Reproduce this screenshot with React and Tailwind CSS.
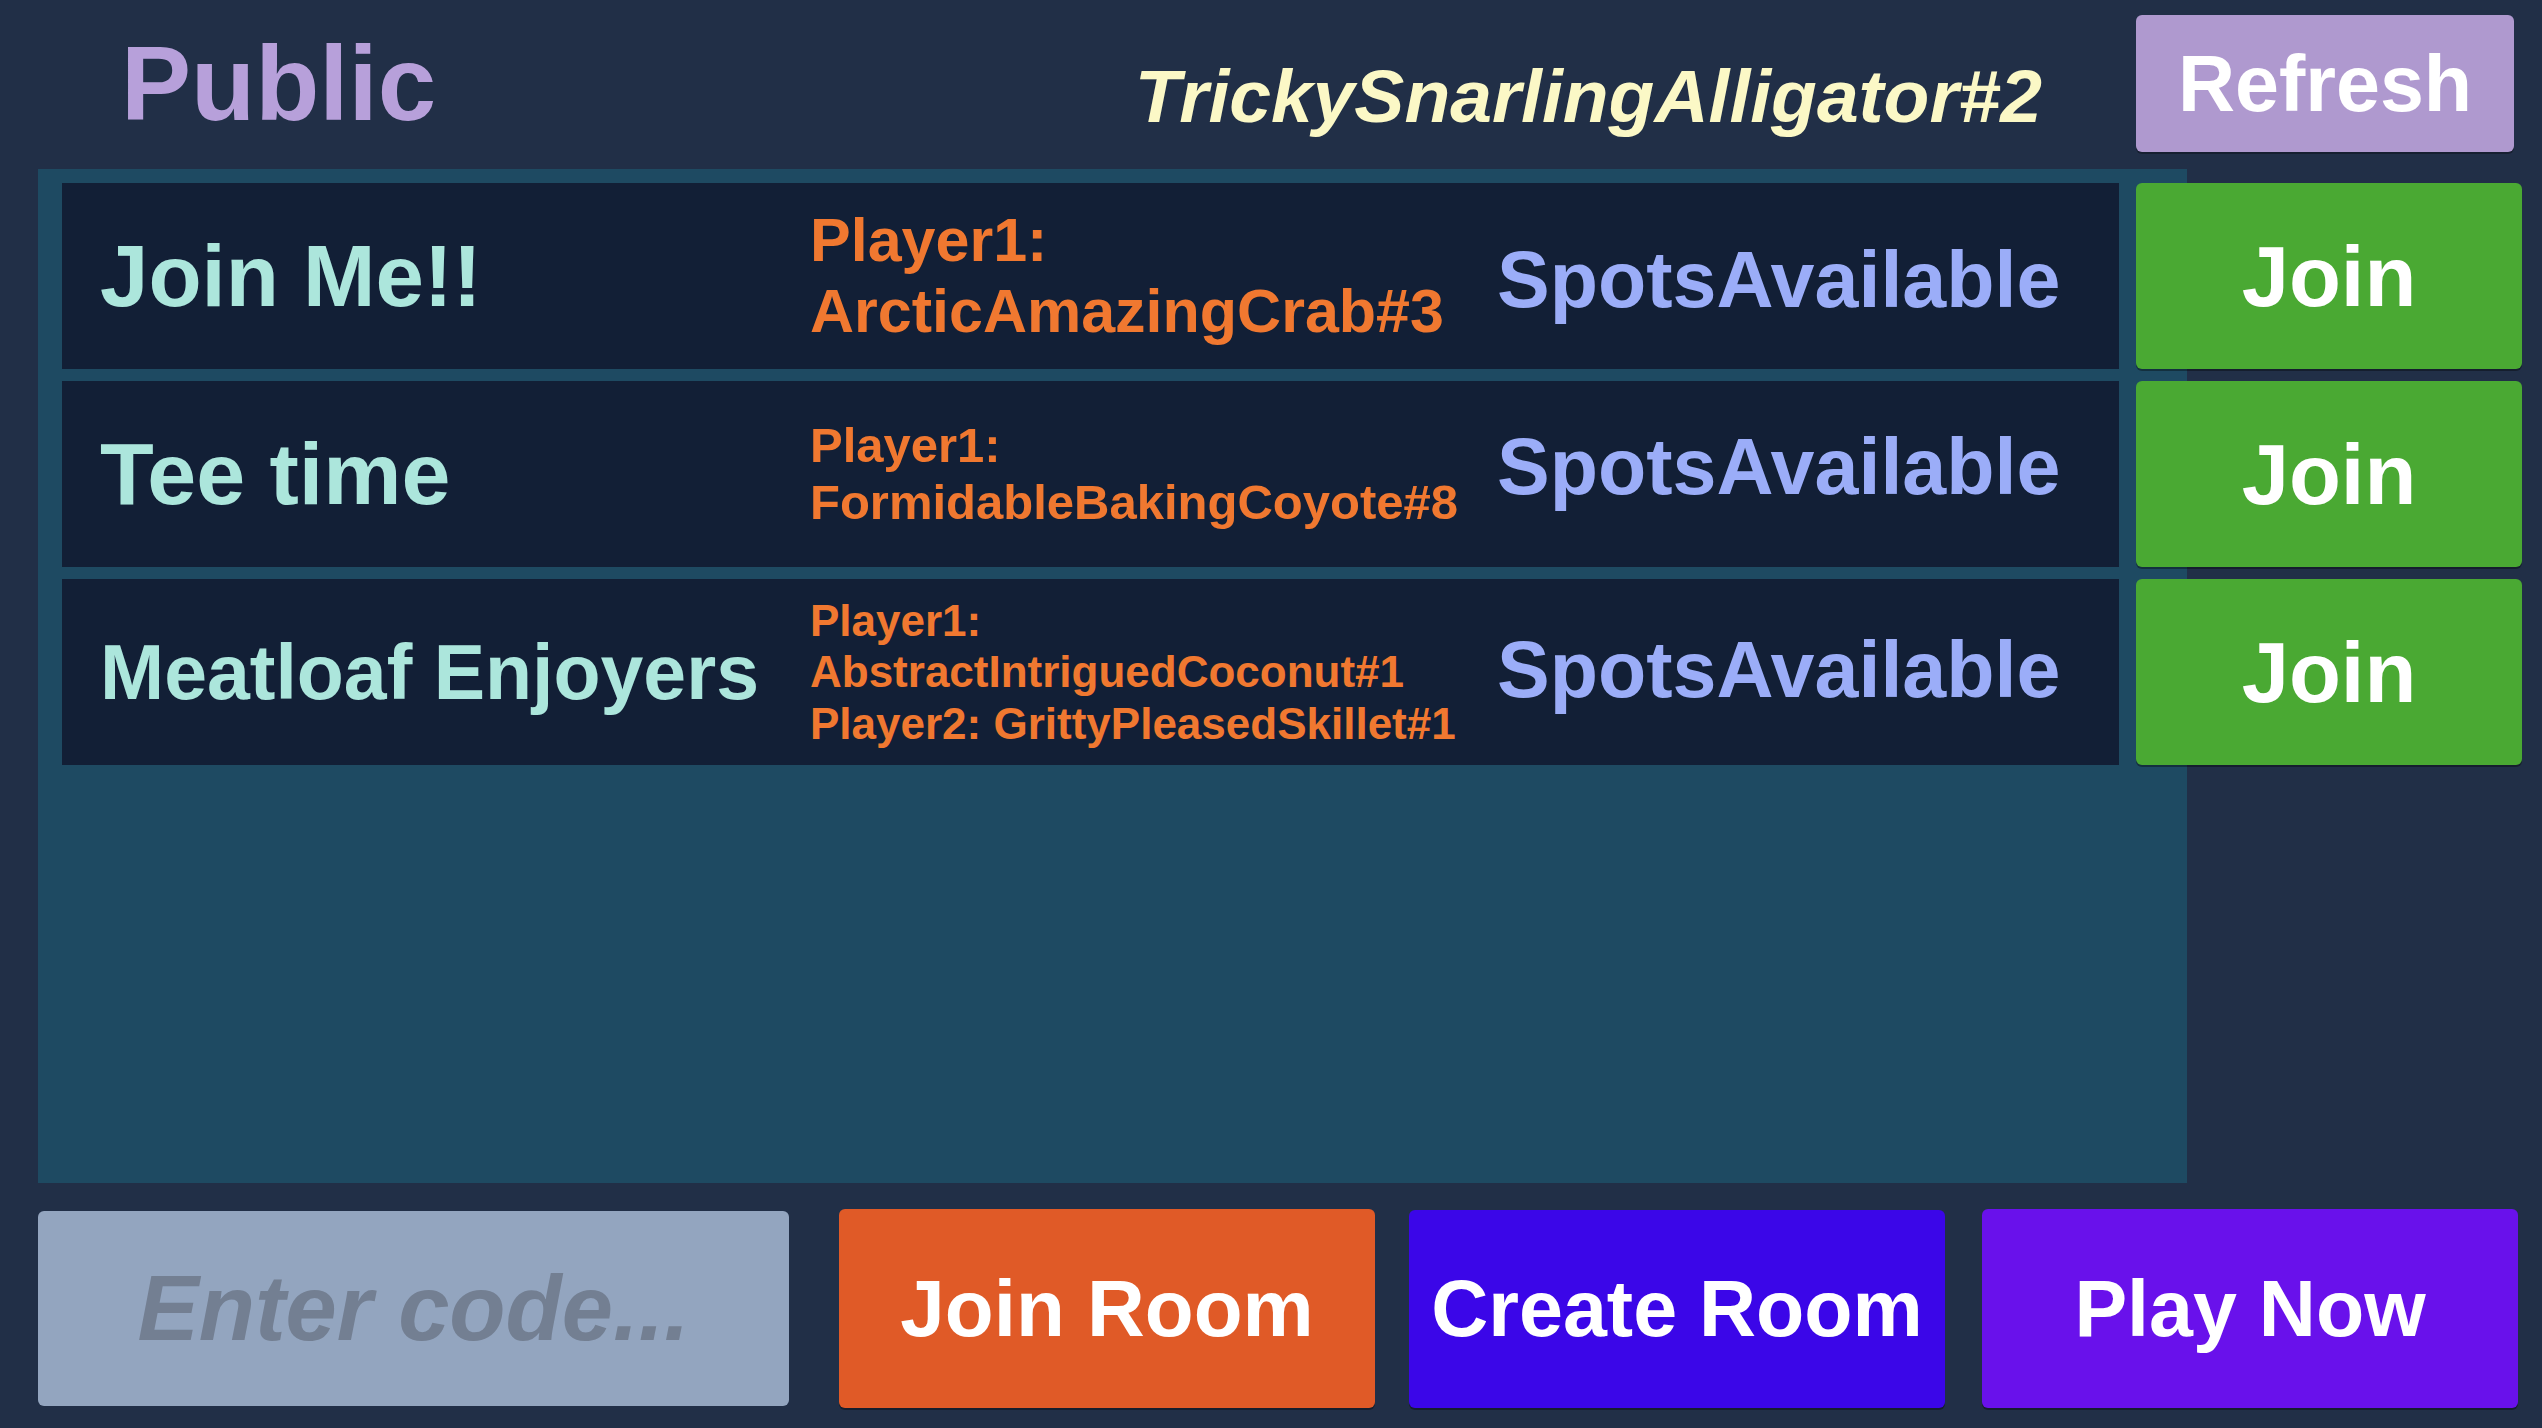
import React from 'react';

const rooms = [
  {
    name: 'Join Me!!',
    nameSize: 'text-[87px]',
    playerSize: 'text-[61px]',
    spotsShift: 'mt-[8px]',
    players: ['Player1:', 'ArcticAmazingCrab#3'],
  },
  {
    name: 'Tee time',
    nameSize: 'text-[88px]',
    playerSize: 'text-[49px]',
    spotsShift: 'mb-[14px]',
    players: ['Player1:', 'FormidableBakingCoyote#8'],
  },
  {
    name: 'Meatloaf Enjoyers',
    nameSize: 'text-[77px]',
    playerSize: 'text-[44px]',
    spotsShift: 'mb-[4px]',
    players: ['Player1:', 'AbstractIntriguedCoconut#1', 'Player2: GrittyPleasedSkillet#1'],
  },
];

const RoomRow = ({ room }) => (
  <div className="flex w-[2460px] h-[186px] gap-[17px] shrink-0">
    <div className="flex items-center w-[2057px] h-full bg-[#121f36]">
      <div className={`w-[748px] pl-[38px] text-[#ace6dc] ${room.nameSize} leading-[1.15] whitespace-nowrap`}>
        {room.name}
      </div>
      <div className={`w-[687px] text-[#f07830] ${room.playerSize} leading-[1.17] whitespace-nowrap`}>
        {room.players.map((p) => (
          <div key={p}>{p}</div>
        ))}
      </div>
      <div className={`flex-1 text-[#9badf8] text-[79px] leading-[1.15] whitespace-nowrap ${room.spotsShift}`}>
        SpotsAvailable
      </div>
    </div>
    <button className="w-[386px] h-full rounded-[6px] bg-[#4aa933] text-white text-[85px] leading-none shadow-[0_2px_0_rgba(0,0,0,0.35)]">
      Join
    </button>
  </div>
);

export default function App() {
  return (
    <div className="w-full h-[1428px] overflow-hidden bg-[#212f47] font-['Liberation_Sans',Arial,sans-serif] font-bold">
      {/* header */}
      <div className="flex items-start h-[169px] overflow-hidden pr-[28px]">
        <div className="ml-[121px] mt-[21px] w-[520px] text-[105px] leading-[1.2] text-[#b7a0da]">
          Public Lobbies
        </div>
        <div className="flex-1" />
        <div className="mt-[53px] text-[75px] leading-[1.15] italic text-[#fbf8c6] whitespace-nowrap">
          TrickySnarlingAlligator#2
        </div>
        <button className="ml-[94px] mt-[15px] w-[378px] h-[137px] rounded-[6px] bg-[#af99cf] text-white text-[79px] leading-none shadow-[0_2px_0_rgba(0,0,0,0.3)]">
          Refresh
        </button>
      </div>

      {/* lobby list */}
      <div className="ml-[38px] w-[2149px] h-[1014px] bg-[#1e4a62] pt-[14px] pl-[24px] flex flex-col gap-[12px]">
        {rooms.map((room) => (
          <RoomRow key={room.name} room={room} />
        ))}
      </div>

      {/* bottom controls */}
      <div className="flex items-center mt-[26px] pl-[38px]">
        <input
          className="w-[751px] h-[195px] rounded-[6px] bg-[#93a5bf] text-center text-[92px] italic font-bold text-[#2a3448] placeholder:text-[#737f92] outline-none"
          placeholder="Enter code..."
        />
        <button className="ml-[50px] w-[536px] h-[199px] rounded-[6px] bg-[#e05a27] text-white text-[80px] leading-none shadow-[0_2px_0_rgba(0,0,0,0.35)]">
          Join Room
        </button>
        <button className="ml-[34px] w-[536px] h-[198px] rounded-[6px] bg-[#3b06e8] text-white text-[79px] leading-none shadow-[0_2px_0_rgba(0,0,0,0.35)]">
          Create Room
        </button>
        <button className="ml-[37px] w-[536px] h-[199px] rounded-[6px] bg-[#6911eb] text-white text-[79px] leading-none shadow-[0_2px_0_rgba(0,0,0,0.35)]">
          Play Now
        </button>
      </div>
    </div>
  );
}
